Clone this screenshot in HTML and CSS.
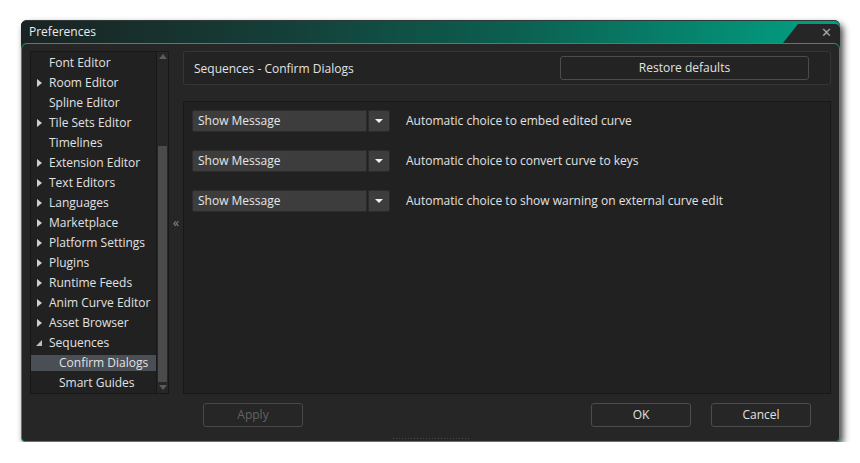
FILE: index.html
```html
<!DOCTYPE html>
<html>
<head>
<meta charset="utf-8">
<link rel="stylesheet" href="styles.css">
</head>
<body>
<div class="window">
  <div class="titlebar">
    <span class="title">Preferences</span>
    <div class="closetab"><span class="close">✕</span></div>
  </div>
  <div class="frame">
    <div class="main">
      <div class="tree">
        <ul class="items">
          <li class="row"><span class="arrow none"></span>Font Editor</li>
          <li class="row"><span class="arrow"></span>Room Editor</li>
          <li class="row"><span class="arrow none"></span>Spline Editor</li>
          <li class="row"><span class="arrow"></span>Tile Sets Editor</li>
          <li class="row"><span class="arrow none"></span>Timelines</li>
          <li class="row"><span class="arrow"></span>Extension Editor</li>
          <li class="row"><span class="arrow"></span>Text Editors</li>
          <li class="row"><span class="arrow"></span>Languages</li>
          <li class="row"><span class="arrow"></span>Marketplace</li>
          <li class="row"><span class="arrow"></span>Platform Settings</li>
          <li class="row"><span class="arrow"></span>Plugins</li>
          <li class="row"><span class="arrow"></span>Runtime Feeds</li>
          <li class="row"><span class="arrow"></span>Anim Curve Editor</li>
          <li class="row"><span class="arrow"></span>Asset Browser</li>
          <li class="row"><span class="arrow open"></span>Sequences</li>
          <li class="row child selected">Confirm Dialogs</li>
          <li class="row child">Smart Guides</li>
        </ul>
        <div class="scrollbar">
          <span class="sb-up"></span>
          <div class="sb-track"><div class="sb-thumb"></div></div>
          <span class="sb-down"></span>
        </div>
      </div>
      <div class="splitter"><span>«</span></div>
      <div class="right">
        <div class="header">
          <span class="heading">Sequences - Confirm Dialogs</span>
          <button class="btn restore">Restore defaults</button>
        </div>
        <div class="content">
          <div class="option">
            <div class="dropdown"><span class="dd-value">Show Message</span><span class="dd-btn"><span class="tri"></span></span></div>
            <span class="label">Automatic choice to embed edited curve</span>
          </div>
          <div class="option">
            <div class="dropdown"><span class="dd-value">Show Message</span><span class="dd-btn"><span class="tri"></span></span></div>
            <span class="label">Automatic choice to convert curve to keys</span>
          </div>
          <div class="option">
            <div class="dropdown"><span class="dd-value">Show Message</span><span class="dd-btn"><span class="tri"></span></span></div>
            <span class="label">Automatic choice to show warning on external curve edit</span>
          </div>
        </div>
      </div>
    </div>
    <div class="footer">
      <button class="btn disabled">Apply</button>
      <div class="spacer"></div>
      <button class="btn">OK</button>
      <button class="btn">Cancel</button>
    </div>
    <div class="grip"></div>
  </div>
</div>
</body>
</html>
```

FILE: styles.css
```css
* { box-sizing: border-box; }
html, body { margin: 0; padding: 0; background: #ffffff; }
body {
  font-family: "Open Sans", "DejaVu Sans", sans-serif;
  font-size: 12px;
  color: #e2e2e2;
}
.window {
  width: 819px;
  height: 422px;
  margin: 20px 0 0 21px;
  display: flex;
  flex-direction: column;
  border-radius: 6px;
  background: #262626;
  box-shadow: 3px 4px 7px rgba(0,0,0,0.75);
}
.titlebar {
  height: 23px;
  flex: none;
  display: flex;
  align-items: center;
  position: relative;
  border-radius: 6px 6px 0 0;
  background: linear-gradient(90deg, #1a2322 0%, #153d37 30%, #0c5f50 60%, #03957a 92%, #00a080 100%);
  border-top: 1px solid #2f3a38;
  padding-left: 8px;
}
.title { color: #ececec; font-size: 12px; line-height: 20px; }
.closetab {
  position: absolute;
  right: 0;
  bottom: 0;
  width: 57px;
  height: 19px;
  background: #262626;
  clip-path: polygon(15px 0, 100% 0, 100% 100%, 0 100%);
  border-top-right-radius: 5px;
}
.close {
  position: absolute;
  right: 8px;
  top: 1px;
  color: #a8a8a8;
  font-family: "DejaVu Sans", sans-serif;
  font-size: 13px;
  line-height: 16px;
}
.frame {
  flex: 1;
  display: flex;
  flex-direction: column;
  border: 1px solid #1d9a6b;
  border-radius: 6px 6px 4px 4px;
  background: #262626;
  padding: 7px 8px 0 8px;
  position: relative;
}
.main { display: flex; height: 343px; }
.tree {
  width: 139px;
  display: flex;
  border: 1px solid #181818;
  background: #212121;
}
.items {
  list-style: none;
  margin: 0;
  padding: 3px 0 0 0;
  flex: 1;
  overflow: hidden;
}
.row {
  height: 16px;
  line-height: 16px;
  margin-bottom: 4px;
  padding-left: 5px;
  display: flex;
  align-items: center;
  white-space: nowrap;
  color: #e2e2e2;
}
.arrow {
  width: 13px;
  height: 16px;
  flex: none;
  position: relative;
}
.arrow::before {
  content: "";
  position: absolute;
  left: 1px;
  top: 4px;
  border-left: 5px solid #cfcfcf;
  border-top: 4px solid transparent;
  border-bottom: 4px solid transparent;
}
.arrow.none::before { display: none; }
.arrow.open::before {
  left: 0;
  top: 5px;
  border-left: 6px solid transparent;
  border-top: 0;
  border-bottom: 6px solid #bdbdbd;
}
.row.child { padding-left: 28px; }
.row.selected { background: #4a4e55; }
.scrollbar {
  width: 12px;
  flex: none;
  display: flex;
  flex-direction: column;
  align-items: center;
  background: #272727;
  border-left: 1px solid #181818;
}
.sb-up, .sb-down {
  width: 0; height: 0;
  margin: 2px 0 3px;
  border-left: 4px solid transparent;
  border-right: 4px solid transparent;
  border-bottom: 5px solid #5c5c5c;
}
.sb-down {
  margin: 3px 0 3px;
  border-bottom: 0;
  border-top: 5px solid #5c5c5c;
}
.sb-track { flex: 1; width: 100%; display: flex; flex-direction: column; justify-content: flex-end; padding: 0 1px; }
.sb-thumb { height: 236px; background: #4b4b4b; }
.splitter {
  width: 14px;
  flex: none;
  display: flex;
  align-items: center;
  justify-content: center;
}
.splitter span {
  color: #8a8a8a;
  font-size: 13px;
  line-height: 12px;
  margin-top: -2px;
}
.right { flex: 1; display: flex; flex-direction: column; }
.header {
  height: 34px;
  flex: none;
  display: flex;
  align-items: center;
  justify-content: space-between;
  border: 1px solid #353535;
  border-radius: 2px;
  background: #232323;
  padding: 0 21px 0 10px;
}
.heading { color: #e2e2e2; }
.btn {
  font-family: "Open Sans", "DejaVu Sans", sans-serif;
  font-size: 12px;
  color: #e2e2e2;
  background: #262626;
  border: 1px solid #4c4c4c;
  border-radius: 3px;
  height: 24px;
  width: 100px;
  padding: 0;
  line-height: 20px;
}
.btn.restore { width: 249px; background: #232323; }
.btn.disabled { color: #636363; border-color: #484848; }
.content {
  margin-top: 16px;
  flex: 1;
  border: 1px solid #181818;
  background: #212121;
  padding: 8px 8px;
  display: flex;
  flex-direction: column;
  gap: 18px;
}
.option { display: flex; align-items: center; height: 22px; }
.dropdown {
  width: 198px;
  height: 22px;
  flex: none;
  display: flex;
  gap: 1px;
}
.dd-value {
  flex: 1;
  background: #3d3d3d;
  border: 1px solid #2c2c2c;
  border-radius: 2px 0 0 2px;
  padding-left: 5px;
  line-height: 19px;
  color: #e6e6e6;
}
.dd-btn {
  width: 22px;
  background: #3d3d3d;
  border: 1px solid #2c2c2c;
  border-radius: 0 2px 2px 0;
  display: flex;
  align-items: center;
  justify-content: center;
}
.tri {
  width: 0; height: 0;
  border-left: 4px solid transparent;
  border-right: 4px solid transparent;
  border-top: 4px solid #f0f0f0;
}
.label { margin-left: 16px; color: #e2e2e2; line-height: 20px; }
.footer {
  display: flex;
  align-items: center;
  gap: 20px;
  padding: 9px 20px 0 173px;
}
.spacer { flex: 1; }
.grip {
  position: absolute;
  left: 370px;
  bottom: 0;
  width: 77px;
  height: 4px;
  background-image: radial-gradient(circle, #4a4a4a 0.8px, transparent 1px);
  background-size: 3px 3px;
}
```
